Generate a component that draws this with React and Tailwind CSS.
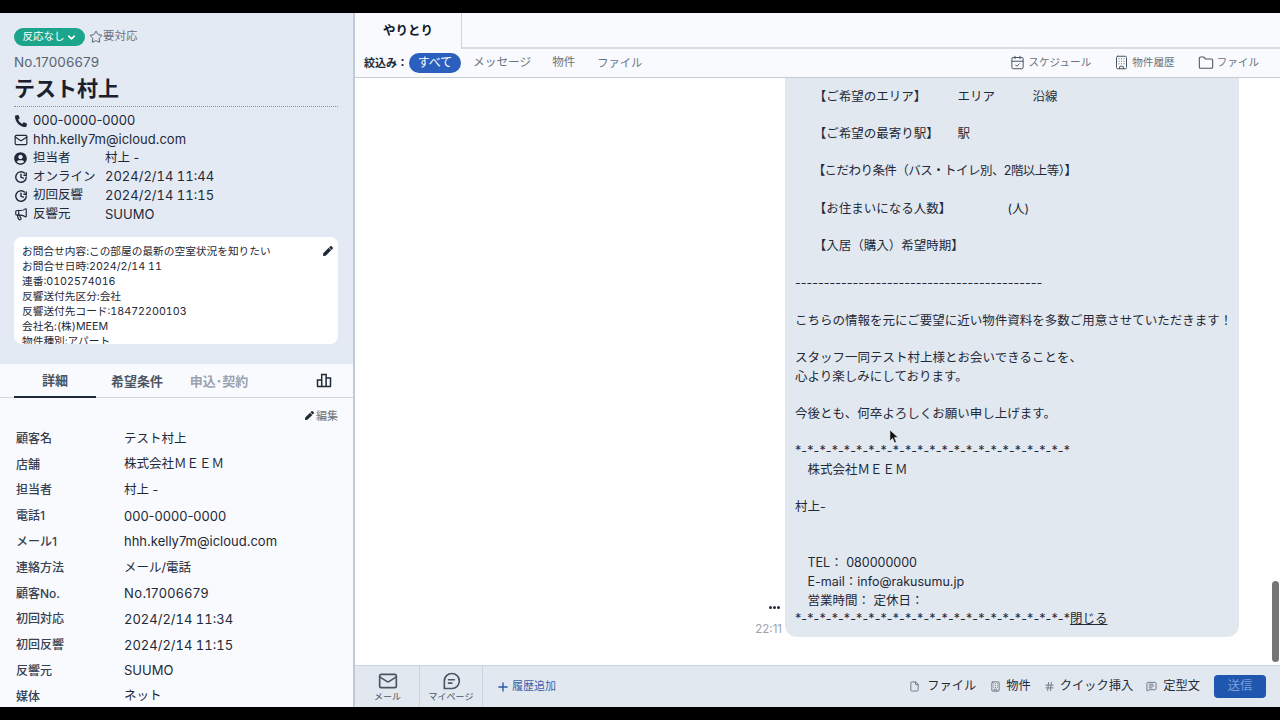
import React from 'react'
import { Mail, Star, ChevronDown, CalendarCheck, Building, Folder, File, Hash, MessageSquareText, Plus, Megaphone } from 'lucide-react'
import { FaPhoneAlt, FaUserCircle, FaPen } from 'react-icons/fa'

const ClockIcon = () => (
  <svg viewBox="0 0 24 24" className="w-[14px] h-[14px] text-[#1f2937]" fill="none" stroke="currentColor" strokeWidth="2.4" strokeLinecap="round">
    <path d="M21 12a9 9 0 1 1-3-6.7" />
    <path d="M12 7v5.5l4 1.5" />
    <path d="M21 5v4h-4" />
  </svg>
)

const info = [
  { icon: <FaUserCircle className="w-[13px] h-[13px] text-[#1f2937]" />, label: '担当者', value: '村上 -' },
  { icon: <ClockIcon />, label: 'オンライン', value: '2024/2/14 11:44' },
  { icon: <ClockIcon />, label: '初回反響', value: '2024/2/14 11:15' },
  { icon: <Megaphone className="w-[14px] h-[14px] text-[#1f2937]" strokeWidth={2} />, label: '反響元', value: 'SUUMO' },
]

const notes = [
  'お問合せ内容:この部屋の最新の空室状況を知りたい',
  'お問合せ日時:2024/2/14 11',
  '連番:0102574016',
  '反響送付先区分:会社',
  '反響送付先コード:18472200103',
  '会社名:(株)MEEM',
  '物件種別:アパート',
]

const details = [
  ['顧客名', 'テスト村上'],
  ['店舗', '株式会社ＭＥＥＭ'],
  ['担当者', '村上 -'],
  ['電話1', '000-0000-0000'],
  ['メール1', 'hhh.kelly7m@icloud.com'],
  ['連絡方法', 'メール/電話'],
  ['顧客No.', 'No.17006679'],
  ['初回対応', '2024/2/14 11:34'],
  ['初回反響', '2024/2/14 11:15'],
  ['反響元', 'SUUMO'],
  ['媒体', 'ネット'],
]

const valueClass = (v) => {
  if (v.startsWith('2024')) return 'text-[13px] tabular-nums text-[#1f2937]'
  if (v.startsWith('No.')) return 'text-[13px] tracking-[0.4px] text-[#1f2937]'
  if (/^[0h]|^SUUMO/.test(v)) return 'text-[13px] text-[#1f2937]'
  return 'text-[12.5px] text-[#1f2937]'
}

const stars = '*-*-*-*-*-*-*-*-*-*-*-*-*-*-*-*-*-*-*-*-*-*-*'

const message = [
  '',
  '　　【ご希望のエリア】　　　エリア　　　沿線',
  '',
  '　　【ご希望の最寄り駅】　　駅',
  '',
  '　　【こだわり条件（バス・トイレ別、2階以上等）】',
  '',
  '　　【お住まいになる人数】　　　　　(人)',
  '',
  '　　【入居（購入）希望時期】',
  '',
  '-------------------------------------------',
  '',
  'こちらの情報を元にご要望に近い物件資料を多数ご用意させていただきます！',
  '',
  'スタッフ一同テスト村上様とお会いできることを、',
  '心より楽しみにしております。',
  '',
  '今後とも、何卒よろしくお願い申し上げます。',
  '',
  stars,
  '　株式会社ＭＥＥＭ',
  '',
  '村上-',
  '',
  '',
  '　TEL： 080000000',
  '　E-mail：info@rakusumu.jp',
  '　営業時間： 定休日：',
]

const Sidebar = () => (
  <aside className="w-[355px] shrink-0 flex flex-col overflow-hidden border-r-2 border-[#c3cad6] bg-[#f8fafd]">
    <div className="h-[351px] shrink-0 bg-[#e3eaf4] pl-[14px] pr-[15px] pt-[15px]">
      <div className="flex items-center h-[18px]">
        <span className="flex items-center justify-center gap-[1px] w-[71px] h-[18px] rounded-full bg-[#1ba58c] text-white text-[10.5px]">
          反応なし<ChevronDown className="w-[11px] h-[11px]" strokeWidth={3.5} />
        </span>
        <span className="flex items-center ml-[4px] text-[11.5px] text-[#6b7280]">
          <Star className="w-[14px] h-[14px] text-[#4b5563]" strokeWidth={1.6} />要対応
        </span>
      </div>
      <div className="mt-[6px] text-[13.5px] leading-[20px] tracking-[0.15px] text-[#5b6470]">No.17006679</div>
      <div className="mt-[3px] pb-[3px] border-b border-dotted border-[#8b93a0] text-[21px] leading-[28px] font-bold text-[#1a202c]">テスト村上</div>
      <div className="mt-[4px] text-[12.5px] text-[#1f2937]">
        <div className="flex items-center h-[19px]"><span className="w-[19px] flex"><FaPhoneAlt className="w-[12px] h-[12px] ml-[1px]" /></span><span className="text-[13px]">000-0000-0000</span></div>
        <div className="flex items-center h-[19px]"><span className="w-[19px] flex"><Mail className="w-[14px] h-[14px]" strokeWidth={2} /></span><span className="text-[13px]">hhh.kelly7m@icloud.com</span></div>
        {info.map((row) => (
          <div key={row.label} className="flex items-center h-[18.7px]">
            <span className="w-[19px] flex">{row.icon}</span>
            <span className="w-[72px]">{row.label}</span>
            <span className={valueClass(row.value)}>{row.value}</span>
          </div>
        ))}
      </div>
      <div className="relative mt-[13px] h-[107px] overflow-hidden rounded-lg bg-white pl-[8px] pt-[7px] text-[10.7px] leading-[15px] tabular-nums text-[#1f2937]">
        {notes.map((n) => <div key={n}>{n}</div>)}
        <FaPen className="absolute top-[9px] right-[5px] w-[10px] h-[10px] text-[#1f2937]" />
      </div>
    </div>

    <div className="h-[34px] shrink-0 flex items-center border-b border-[#d1d5db] pl-[14px] pr-[15px] relative">
      <div className="w-[82px] h-[34px] flex items-center justify-center pt-[2px] border-b-2 border-[#1f2937] text-[13px] font-bold text-[#4b5563]">詳細</div>
      <div className="w-[82px] pt-[2px] text-center text-[13px] font-bold text-[#4b5563]">希望条件</div>
      <div className="w-[82px] pt-[2px] text-center text-[13px] font-bold text-[#9ca3af]">申込･契約</div>
      <svg viewBox="0 0 16 16" className="ml-auto mr-[6px] mb-[2px] w-[16px] h-[16px] text-[#1f2937]" fill="none" stroke="currentColor" strokeWidth="1.5">
        <path d="M1 14.5h14M1.5 14.5V8h4.2v6.5M5.7 14.5V2.5h4.4v12M10.1 14.5V6h4.4v8.5" />
      </svg>
    </div>

    <div className="flex-1 overflow-hidden pl-[16px] pr-[15px]">
      <div className="flex items-start justify-end h-[28px] pt-[10px] text-[11px] leading-[16px] text-[#6b7280]">
        <FaPen className="w-[9px] h-[9px] mt-[3px] text-[#1f2937] mr-[2px]" />編集
      </div>
      {details.map(([k, v]) => (
        <div key={k} className="flex items-center h-[25.8px]">
          <span className="w-[108px] text-[12px] font-medium text-[#374151]">{k}</span>
          <span className={valueClass(v)}>{v}</span>
        </div>
      ))}
    </div>
  </aside>
)

const Header = () => (
  <header className="shrink-0 bg-[#f8fafd]">
    <div className="flex h-[36px]">
      <div className="w-[107px] flex items-center justify-center border-r border-[#cbd5e1] text-[12.5px] font-bold text-[#111827]">やりとり</div>
      <div className="flex-1 border-b-2 border-[#d7dde5]" />
    </div>
    <div className="flex items-center h-[29px] border-b border-[#c5ccd6] pl-[9px] text-[12px] text-[#6b7280]">
      <span className="text-[11px] font-bold text-[#1f2937]">絞込み：</span>
      <span className="ml-[1px] w-[52px] h-[20px] flex items-center justify-center rounded-full bg-[#2b5fbd] text-white">すべて</span>
      <span className="ml-[12px] text-[11.7px]">メッセージ</span>
      <span className="ml-[21px] text-[11.5px]">物件</span>
      <span className="ml-[22px] text-[11.3px]">ファイル</span>
      <div className="ml-auto flex items-center gap-[23px] pr-[21px] text-[10.6px]">
        <span className="flex items-center gap-[3px]"><CalendarCheck className="w-[15px] h-[15px] text-[#4b5563]" strokeWidth={1.6} />スケジュール</span>
        <span className="flex items-center gap-[3px]"><Building className="w-[15px] h-[15px] text-[#4b5563]" strokeWidth={1.6} />物件履歴</span>
        <span className="flex items-center gap-[3px]"><Folder className="w-[16px] h-[16px] text-[#4b5563]" strokeWidth={1.6} />ファイル</span>
      </div>
    </div>
  </header>
)

const Thread = () => (
  <div className="relative flex-1 min-h-0 overflow-hidden bg-white flex justify-end items-end pr-[41px] pb-[28px]">
    <div className="flex flex-col items-end mr-[3px]">
      <span className="flex gap-[1px] mr-[2px]">
        <span className="w-[3px] h-[3px] rounded-full bg-[#1f2937]" />
        <span className="w-[3px] h-[3px] rounded-full bg-[#1f2937]" />
        <span className="w-[3px] h-[3px] rounded-full bg-[#1f2937]" />
      </span>
      <span className="mt-[12px] text-[11.5px] leading-[16px] text-[#9ca3af]">22:11</span>
    </div>
    <div className="w-[454px] shrink-0 rounded-b-[12px] bg-[#e2e8f0] pl-[10px] pb-[8px] text-[12.5px] leading-[18.68px] text-[#1f2937]">
      {message.map((line, i) => (
        <div
          key={i}
          className={line === stars ? 'h-[18.68px] whitespace-pre tracking-[0.1px]' : line.includes('こだわり') ? 'h-[18.68px] whitespace-pre tracking-[-0.55px]' : 'h-[18.68px] whitespace-pre'}
        >
          {line}
        </div>
      ))}
      <div className="h-[18.68px] whitespace-pre">
        <span className="tracking-[0.1px]">{stars}</span><span className="underline">閉じる</span>
      </div>
    </div>
    <div className="absolute right-[1px] bottom-[3px] w-[7px] h-[81px] rounded-full bg-[#757575]" />
  </div>
)

const Footer = () => (
  <footer className="shrink-0 h-[42px] flex items-stretch border-t border-[#cbd5e1] bg-[#e2e8f0] pl-[1px]">
    <div className="w-[64px] flex flex-col items-center justify-center border-r border-[#cbd5e1] text-[9px] leading-[12px] text-[#4b5563]">
      <Mail className="w-[20px] h-[20px] text-[#4b5563]" strokeWidth={2} />メール
    </div>
    <div className="w-[63px] flex flex-col items-center justify-center border-r border-[#cbd5e1] text-[9px] leading-[12px] text-[#4b5563]">
      <svg viewBox="0 0 24 24" className="w-[20px] h-[20px]" fill="none" stroke="#4b5563" strokeWidth="2" strokeLinecap="round">
        <path d="M4 21V12a9 9 0 1 1 9 9z" />
        <path d="M9 10.5h7M9 14.5h4" />
      </svg>マイページ
    </div>
    <div className="ml-[13px] flex items-center gap-[2px] text-[11px] text-[#3f5ea8]">
      <Plus className="w-[14px] h-[14px] text-[#2c5aa8]" strokeWidth={2.4} />履歴追加
    </div>
    <div className="ml-auto flex items-center pr-[14px] text-[12.25px] text-[#1f2937]">
      <span className="flex items-center gap-[7px]"><File className="w-[11px] h-[11px] text-[#6b7280]" />ファイル</span>
      <span className="flex items-center gap-[5px] ml-[14px]"><Building className="w-[11px] h-[11px] text-[#6b7280]" />物件</span>
      <span className="flex items-center gap-[5px] ml-[13px]"><Hash className="w-[11px] h-[11px] text-[#6b7280]" />クイック挿入</span>
      <span className="flex items-center gap-[6px] ml-[13px]"><MessageSquareText className="w-[11px] h-[11px] text-[#6b7280]" />定型文</span>
      <span className="ml-[14px] w-[52px] h-[23px] flex items-center justify-center rounded-[4px] bg-[#1e56b0] text-[12.5px] text-[#7f9fd6]">送信</span>
    </div>
  </footer>
)

export default function App() {
  return (
    <div className="relative h-[720px] w-[1280px] overflow-hidden bg-black py-[13px] font-['Inter','Noto_Sans_CJK_JP',sans-serif]">
      <div className="flex h-full bg-white">
        <Sidebar />
        <main className="flex-1 min-w-0 flex flex-col">
          <Header />
          <Thread />
          <Footer />
        </main>
      </div>
      {/* mouse pointer */}
      <svg viewBox="0 0 12 16" className="absolute left-[889px] top-[429px] w-[11px] h-[15px]">
        <path d="M1 1v12l3-3 2 5 2-1-2-5h4z" fill="#111" stroke="#fff" strokeWidth="0.6" />
      </svg>
    </div>
  )
}
